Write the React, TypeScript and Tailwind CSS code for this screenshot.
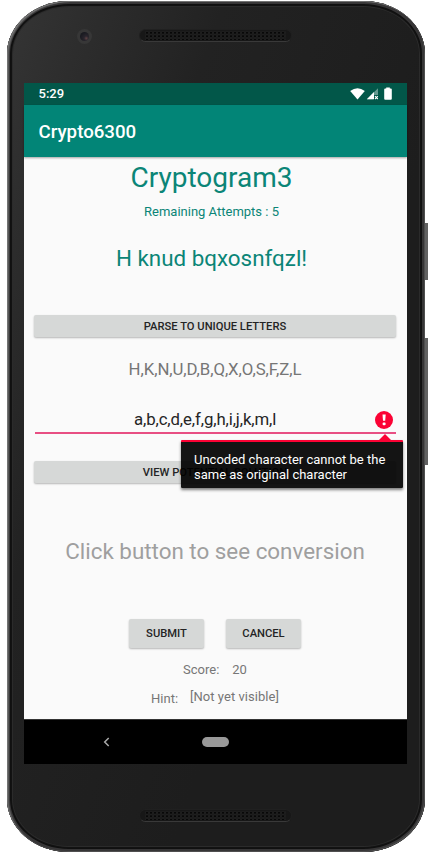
import type { ReactNode } from "react";

function Speaker() {
  return (
    <div className="h-[13px] w-[153px] rounded-full border border-[#202020] border-b-[#393939] bg-[#171717] px-[5px] py-[1px]">
      <div className="h-full w-full bg-[radial-gradient(circle,#080808_34%,#202020_48%,#1b1b1b_70%)] bg-[length:4px_3.5px]" />
    </div>
  );
}

function Button({ className, children }: { className: string; children: ReactNode }) {
  return (
    <button
      className={`flex items-center justify-center whitespace-nowrap rounded-[2px] bg-[#d6d8d7] pt-[2px] font-medium text-[#242424] shadow-[0_1px_2px_rgba(0,0,0,0.28)] ${className}`}
    >
      {children}
    </button>
  );
}

function StatusIcons() {
  return (
    <svg className="h-[14px] w-[44px]" viewBox="0 0 44 14" fill="white">
      <path d="M.2 3.9Q7.500-1.500 14.800 3.900L7.500 12.600Z" />
      <path d="M16.800 12.300 28 1.200V8h-5v4.300Z" opacity=".4" />
      <path d="M16.800 12.300 24 5.100v7.200Z" />
      <path d="m25 9.200 2.800 2.800m0-2.800L25 12" stroke="white" strokeWidth="1.100" />
      <path d="M36.200 1.500V.5h3.600v1h1a1 1 0 0 1 1 1v9.300a1 1 0 0 1-1 1h-5.600a1 1 0 0 1-1-1V2.500a1 1 0 0 1 1-1Z" />
    </svg>
  );
}

function ErrorPopup() {
  return (
    <div className="absolute right-[4px] top-[277px] w-[222px]">
      <div className="ml-[198px] h-[6px] w-[12px] bg-[#fb0234] [clip-path:polygon(50%_0,100%_100%,0_100%)]" />
      <div className="h-[48px] rounded-[1px] border-t-2 border-[#fb0234] bg-black/92 pl-[13px] pt-[10px] text-[13px] leading-[15px] text-white shadow-[0_2px_3px_rgba(0,0,0,0.5)]">
        <div className="whitespace-nowrap">Uncoded character cannot be the</div>
        <div className="whitespace-nowrap">same as original character</div>
      </div>
    </div>
  );
}

export default function App() {
  return (
    <div className="h-[859px] w-[432px] overflow-hidden bg-white pl-[7px] pt-px font-[Roboto,'Noto_Sans',sans-serif]">
      <div className="relative h-[851px] w-[421px]">
        <div className="absolute right-0 top-[222px] h-[57px] w-[6px] bg-[#626262]" />
        <div className="absolute right-0 top-[337px] h-[127px] w-[6px] bg-[#626262]" />
        <div className="relative flex h-[851px] w-[418px] flex-col items-center rounded-[62px/53px] bg-[linear-gradient(110deg,#353535_0%,#2d2d2d_12%,#222_30%,#1d1d1d_65%,#1d1d1d_100%)] pl-[17px] pr-[18px] shadow-[inset_1px_1px_0_#737373,inset_-1px_-1px_0_#4f4f4f,inset_2px_1px_1px_#5c5c5c,inset_0_0_0_3px_#363536,inset_0_0_1px_5px_#101010,inset_0_0_0_6px_#2f2f2f]">
          <div className="relative flex h-[82px] w-full shrink-0 justify-center pt-[28px]">
            <div className="absolute left-[53px] top-[28px] flex h-[15px] w-[15px] items-center justify-center rounded-full bg-[#373737]">
              <div className="h-[9px] w-[9px] rounded-full bg-[radial-gradient(circle_at_70%_70%,#604344_0%,#29252d_25%,#191a20_70%)]" />
            </div>
            <Speaker />
          </div>
          <div className="flex h-[681px] w-[383px] shrink-0 flex-col bg-[#fafafa]">
            <header className="flex h-[22px] items-center justify-between bg-[#025749] pl-[14.500px] pr-[13px] text-[13px] font-medium text-white">
              <span>5:29</span>
              <StatusIcons />
            </header>
            <div className="z-10 flex h-[52px] items-center bg-[#028577] pl-[14.500px] pt-[3px] text-[18.700px] font-medium text-white shadow-[0_1px_2px_rgba(0,0,0,0.35)]">
              Crypto6300
            </div>
            <main className="relative flex h-[562px] flex-col items-center whitespace-nowrap pr-[1px] text-[#767676]">
              <h1 className="-ml-[7px] h-[42px] text-[28px] leading-[42px] text-[#0b8577]">Cryptogram3</h1>
              <p className="-ml-[7px] h-[26px] text-[13px] leading-[26px] text-[#0b8577]">Remaining Attempts : 5</p>
              <p className="-ml-[7px] h-[68px] text-[22.400px] leading-[66px] text-[#0b8577]">H knud bqxosnfqzl!</p>
              <Button className="mt-[22px] h-[22px] w-[362px] text-[11.200px]">PARSE TO UNIQUE LETTERS</Button>
              <p className="h-[64px] text-[16.800px] leading-[64px] tracking-[-0.080px]">H,K,N,U,D,B,Q,X,O,S,F,Z,L</p>
              <div className="flex h-[31px] w-[362px] items-center pl-[100px] pt-[6px] text-[16.800px] text-[#252525]">
                <span className="flex-1 tracking-[-0.120px]">a,b,c,d,e,f,g,h,i,j,k,m,l</span>
                <svg className="mr-[3px] h-[18px] w-[18px]" viewBox="0 0 18 18">
                  <circle cx="9" cy="9" r="9" fill="#fb0234" />
                  <path d="M7.500 3.500h3.200l-.5 6.300H8Z" fill="white" />
                  <rect x="7.600" y="11.500" width="3" height="2.800" rx="1" fill="white" />
                </svg>
              </div>
              <div className="h-[1.500px] w-[361px] bg-[#e84f83]" />
              <Button className="mt-[27.500px] h-[22px] w-[362px] text-[11.200px]">VIEW POTENTIAL SOLUTION</Button>
              <p className="h-[136px] text-[22.400px] leading-[137px] text-[#9f9f9f]">Click button to see conversion</p>
              <div className="flex h-[29px] gap-[22px]">
                <Button className="h-[29px] w-[75px] text-[11.200px]">SUBMIT</Button>
                <Button className="h-[29px] w-[75px] text-[11.200px]">CANCEL</Button>
              </div>
              <div className="mt-[13px] flex h-[18px] gap-[13px] text-[13px] leading-[18px]">
                <span>Score:</span><span>20</span>
              </div>
              <div className="mt-[9px] flex h-[20px] gap-[12px] text-[13px] leading-[18px]">
                <span className="pt-[2px]">Hint:</span><span className="tracking-[0.040px]">[Not yet visible]</span>
              </div>
              <ErrorPopup />
            </main>
            <nav className="flex h-[45px] items-center border-t border-[#333] bg-black pb-[1px]">
              <svg className="ml-[79px] h-[10px] w-[7px]" viewBox="0 0 7 10" fill="none" stroke="#aaa" strokeWidth="1.500"><path d="M5.700 1 1.700 5l4 4" /></svg>
              <div className="ml-[92px] h-[10px] w-[27px] rounded-full bg-[#999]" />
            </nav>
          </div>
          <div className="flex h-[88px] w-full justify-center pt-[45px]"><Speaker /></div>
        </div>
      </div>
    </div>
  );
}
